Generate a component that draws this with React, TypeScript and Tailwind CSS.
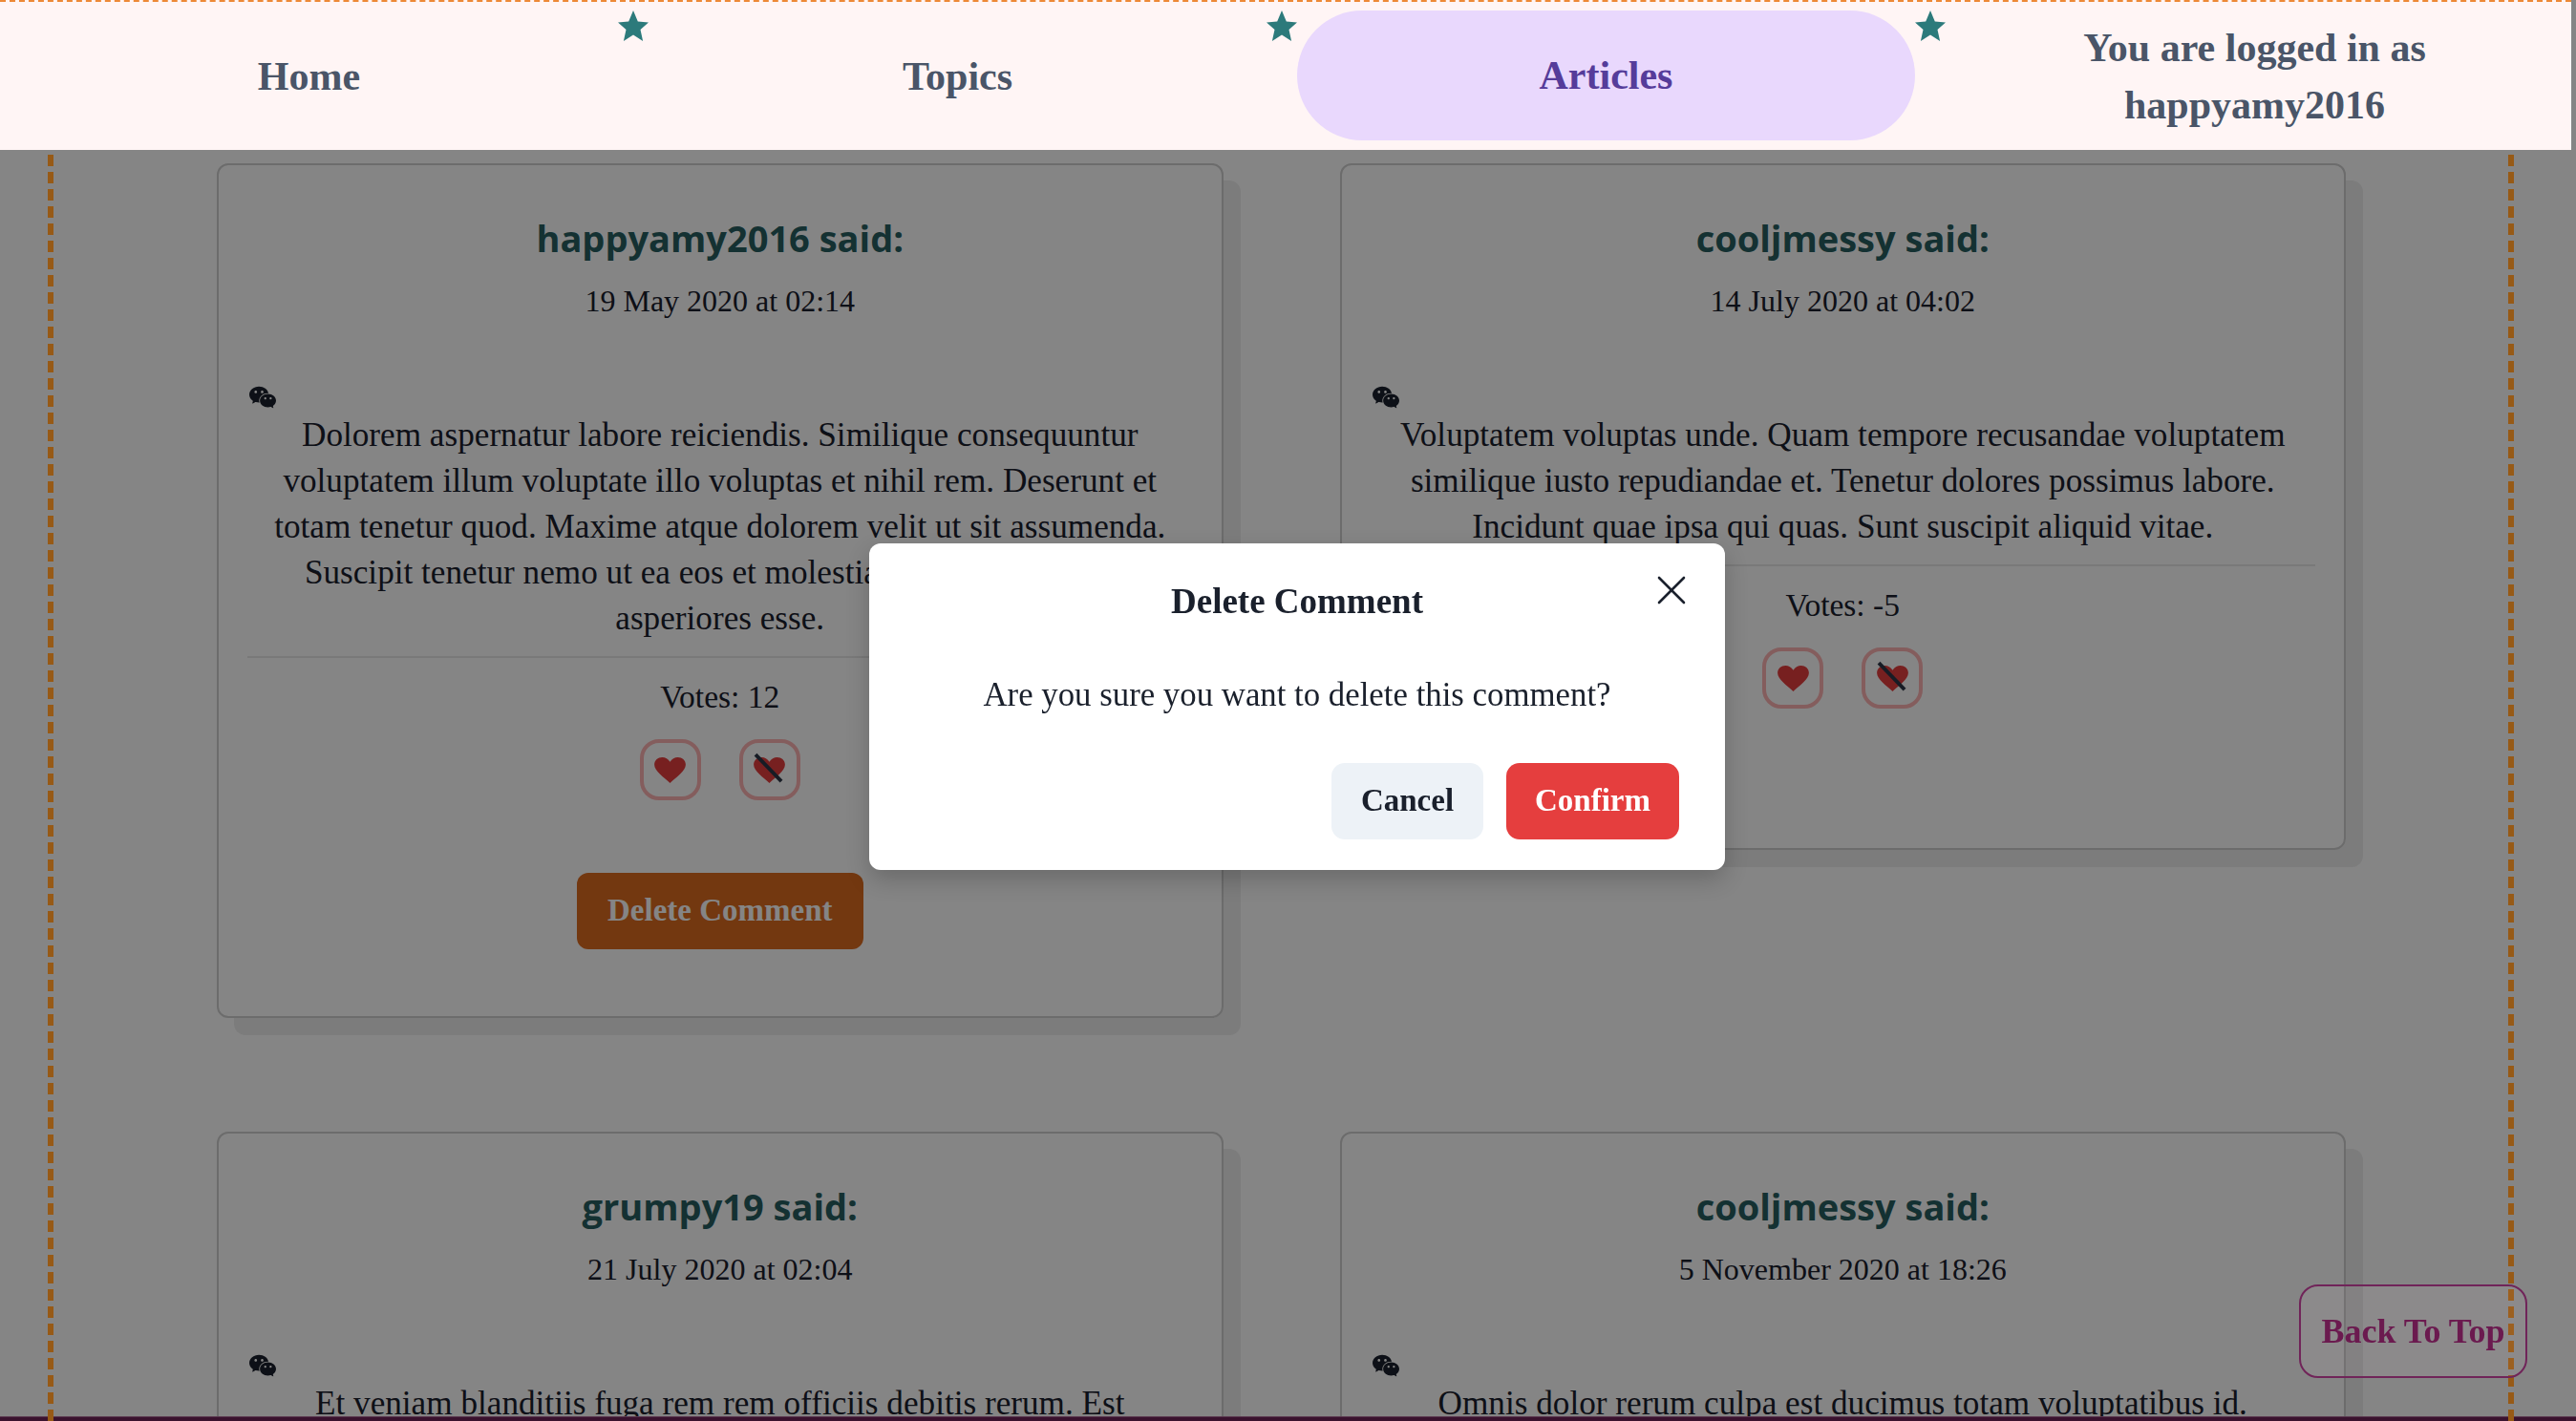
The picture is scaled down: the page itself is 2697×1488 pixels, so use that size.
import React from 'react';
import { X } from 'lucide-react';
import { AiFillWechat } from 'react-icons/ai';

const serif = "font-['Liberation_Serif',serif]";

const NavStar = () => (
  <div className="w-8 shrink-0 self-start mt-[9px]">
    <svg viewBox="0 0 32 32" className="w-8 h-8 block" fill="#2c7a7b">
      <path d="M16 0l4.800 11.600 11.200.900-8.500 7.600 2.600 11.900L16 25.600 5.900 32l2.600-11.900L0 12.500l11.200-.900z" />
    </svg>
  </div>
);

const Heart = ({ crossed }: { crossed?: boolean }) => (
  <button className="w-16 h-16 flex items-center justify-center rounded-[20px] border-4 border-[#fc8181]/60">
    <svg viewBox="0 0 34 28" className="w-[33px] h-[27px] overflow-visible">
      <path
        d="M17 28C11 22 0 15 0 8 0 3 4 0 8.500 0 12 0 15 2 17 5 19 2 22 0 25.500 0 30 0 34 3 34 8 34 15 23 22 17 28z"
        fill="#e53e3e"
      />
      {crossed && <line x1="2" y1="-3" x2="30" y2="26" stroke="#2d3748" strokeWidth="4" />}
    </svg>
  </button>
);

type CommentProps = {
  author: string;
  date: string;
  lines: string[];
  votes?: number;
  canDelete?: boolean;
};

const Comment = ({ author, date, lines, votes, canDelete }: CommentProps) => (
  <div className="rounded-xl border-2 border-[#cfcfcf] shadow-[18px_18px_0_rgba(0,0,0,0.07)] px-[30px] pt-[48px] pb-[70px] text-[#1a202c] text-center self-start">
    <h3 className="font-['Open_Sans',sans-serif] font-bold text-[38px] leading-[56px] text-[#285e61]">
      {author} said:
    </h3>
    <p className="text-[32px] leading-[48px] mt-[14px]">{date}</p>
    <div className="mt-[61px] h-[32px]">
      <AiFillWechat className="w-[32px] h-[32px]" color="#1a202c" />
    </div>
    <div className="text-[35.200px] leading-[48px]">
      {lines.map((line) => (
        <div key={line} className="whitespace-nowrap">
          {line}
        </div>
      ))}
    </div>
    {votes !== undefined && (
      <>
        <div className="border-t-2 border-[#e8e8e8] mt-[15px]" />
        <p className="text-[33.500px] leading-[48px] mt-[17px]">Votes: {votes}</p>
        <div className="flex justify-center gap-10 mt-[20px]">
          <Heart />
          <Heart crossed />
        </div>
        <div className="mt-[76px]">
          {canDelete && (
            <button className="w-[300px] h-20 rounded-xl bg-[#dd6b20] text-white font-bold text-[33px]">
              Delete Comment
            </button>
          )}
        </div>
      </>
    )}
  </div>
);

export default function App() {
  return (
    <div className={`h-screen flex flex-col overflow-hidden bg-white ${serif}`}>
      {/* nav sits above the modal overlay */}
      <nav className="relative z-30 w-[2692px] h-[157px] shrink-0 bg-[#fff5f5] border-t-2 border-dashed border-[#ed8936] flex text-[42px] font-bold text-[#4a5568]">
        <a className="w-[647px] shrink-0 flex items-center justify-center h-[136px] mt-[10px]">Home</a>
        <NavStar />
        <a className="w-[647px] shrink-0 flex items-center justify-center h-[136px] mt-[10px]">Topics</a>
        <NavStar />
        <a className="w-[647px] shrink-0 flex items-center justify-center h-[136px] mt-[9px] rounded-full bg-[#e9d8fd] text-[#553c9a]">
          Articles
        </a>
        <NavStar />
        <div className="w-[647px] shrink-0 flex items-center justify-center h-[136px] mt-[10px] text-center leading-[60px]">
          <span>
            You are logged in as
            <br />
            happyamy2016
          </span>
        </div>
      </nav>

      <main className="flex-1 min-h-0 overflow-hidden pl-[227px] pr-[241px] pt-[14px]">
        <div className="grid grid-cols-2 gap-x-[122px] gap-y-[119px] items-start">
          <Comment
            author="happyamy2016"
            date="19 May 2020 at 02:14"
            lines={[
              'Dolorem aspernatur labore reiciendis. Similique consequuntur',
              'voluptatem illum voluptate illo voluptas et nihil rem. Deserunt et',
              'totam tenetur quod. Maxime atque dolorem velit ut sit assumenda.',
              'Suscipit tenetur nemo ut ea eos et molestiae quia nostrum sint',
              'asperiores esse.',
            ]}
            votes={12}
            canDelete
          />
          <Comment
            author="cooljmessy"
            date="14 July 2020 at 04:02"
            lines={[
              'Voluptatem voluptas unde. Quam tempore recusandae voluptatem',
              'similique iusto repudiandae et. Tenetur dolores possimus labore.',
              'Incidunt quae ipsa qui quas. Sunt suscipit aliquid vitae.',
            ]}
            votes={-5}
          />
          <Comment
            author="grumpy19"
            date="21 July 2020 at 02:04"
            lines={['Et veniam blanditiis fuga rem rem officiis debitis rerum. Est']}
          />
          <Comment
            author="cooljmessy"
            date="5 November 2020 at 18:26"
            lines={['Omnis dolor rerum culpa est ducimus totam voluptatibus id.']}
          />
        </div>
      </main>

      <footer className="h-[5px] shrink-0 bg-[#702459] border-t border-[#ae7099]" />

      {/* overlay, the dashed frame stays undimmed inside it */}
      <div className="fixed inset-0 z-20 bg-black/48">
        <div className="ml-[50px] w-[2582px] h-full border-x-[6px] border-dashed border-[#975a16]" />
      </div>
      <button className="fixed z-20 left-[2407px] top-[1345px] w-[239px] h-[98px] rounded-[20px] border-2 border-[#702459] bg-[#fed7e2]/5 text-[#6b1a4f] font-bold text-[36px]">
        Back To Top
      </button>

      <div className="fixed inset-0 z-40 flex items-start justify-center pt-[569px] pl-[19px]">
        <div className="relative w-[896px] h-[342px] rounded-xl bg-white shadow-[0_10px_25px_rgba(0,0,0,0.2)] text-[#1a202c] flex flex-col">
          <h2 className="font-bold text-[37px] leading-[48px] text-center mt-[37px]">Delete Comment</h2>
          <button className="absolute left-[814px] top-[23px]">
            <X className="w-[52px] h-[52px]" strokeWidth={1.2} />
          </button>
          <p className="text-[34.800px] leading-[48px] text-center mt-[50px]">Are you sure you want to delete this comment?</p>
          <div className="flex justify-end gap-6 pr-[48px] mt-[47px]">
            <button className="w-[159px] h-20 rounded-[14px] bg-[#edf2f7] font-bold text-[33px]">Cancel</button>
            <button className="w-[181px] h-20 rounded-[14px] bg-[#e53e3e] text-white font-bold text-[33px]">Confirm</button>
          </div>
        </div>
      </div>
    </div>
  );
}
